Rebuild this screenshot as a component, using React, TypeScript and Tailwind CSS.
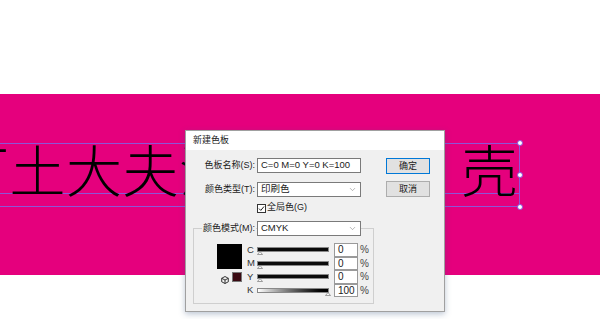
import { ChevronDown } from "lucide-react";

const ROWS = [
    { id: "C", value: "0", bar: "bg-[#0a0a0a]", marker: "left" },
    { id: "M", value: "0", bar: "bg-[#0a0a0a]", marker: "left" },
    { id: "Y", value: "0", bar: "bg-[#0a0a0a]", marker: "left" },
    { id: "K", value: "100", bar: "bg-gradient-to-r from-white to-black", marker: "right" },
];

function Select({ value, width }: { value: string; width: string }) {
    return (
        <div className={`${width} h-[15px] bg-white border border-[#7a7a7a] flex items-center justify-between pl-[3px] pr-[3px]`}>
            <span className="text-[9.5px]">{value}</span>
            <ChevronDown size={9} strokeWidth={1.4} className="text-[#777]" />
        </div>
    );
}

function Label({ text }: { text: string }) {
    return (
        <div className="w-[70px] flex justify-end shrink-0">
            <span className="bg-[#f0f0f0] px-[1px] leading-none text-[9px]">{text}</span>
        </div>
    );
}

function CubeIcon() {
    return (
        <svg width="8" height="8" viewBox="0 0 8 8" className="mt-[4px]">
            <path d="M4 0.5 L7.3 2.3 L7.3 5.8 L4 7.5 L0.7 5.8 L0.7 2.3 Z" fill="none" stroke="#222" strokeWidth="0.9" />
            <path d="M0.7 2.3 L4 4 L7.3 2.3 M4 4 L4 7.5" fill="none" stroke="#222" strokeWidth="0.9" />
        </svg>
    );
}

export default function App() {
    return (
        <div className="relative w-[600px] h-[319px] bg-white overflow-hidden">
            {/* Artboard band */}
            <div className="mt-[94px] h-[181px] bg-[#e5007d] relative">
                {/* Text frame */}
                <div className="absolute left-0 top-[49px] w-[520px] h-[64px] border-t border-b border-r border-[#8d55d8]">
                    <div className="absolute left-0 right-0 top-[49px] h-px bg-[#8d55d8]" />
                    <span className="absolute right-[-4px] top-[-4px] w-[6px] h-[6px] rounded-full bg-white border border-[#8d55d8]" />
                    <span className="absolute right-[-4px] top-[28px] w-[6px] h-[6px] rounded-full bg-white border border-[#8d55d8]" />
                    <span className="absolute right-[-4px] bottom-[-4px] w-[6px] h-[6px] rounded-full bg-white border border-[#8d55d8]" />
                </div>
                <div className="absolute left-[-47px] top-[46px] flex text-[56px] leading-[56px] text-black font-light font-['Noto_Sans_CJK_SC',sans-serif]">
                    <span className="tracking-[0.5px]">可土大夫沙</span>
                    <span className="ml-[226px]">壳</span>
                </div>
            </div>

            {/* Red arrow */}
            <svg className="absolute left-[200px] top-[203px]" width="52" height="20" viewBox="0 0 52 20">
                <polygon points="7,15.5 35.7,10.6 36.4,12.8 47.5,6 34.2,4.4 34.9,6.9" fill="#e8161c" />
            </svg>

            {/* Dialog */}
            <div className="absolute left-[185px] top-[130px] w-[260px] h-[182px] bg-[#f0f0f0] border border-[#a0a0a0] shadow-[0_2px_6px_rgba(60,90,130,0.35)] text-[10px] text-[#1a1a1a] font-['Liberation_Sans','Noto_Sans_CJK_SC',sans-serif]">
                <div className="h-[19px] bg-white flex items-center pl-[7px] text-[9px]">新建色板</div>
                <div className="flex">
                    <div className="w-[198px] pt-[8px]">
                        <div className="flex items-center">
                            <Label text="色板名称(S):" />
                            <div className="ml-[1px] w-[104px] h-[15px] bg-white border border-[#7a7a7a] flex items-center pl-[3px] text-[9.5px]">
                                C=0 M=0 Y=0 K=100
                            </div>
                        </div>
                        <div className="flex items-center mt-[9px]">
                            <Label text="颜色类型(T):" />
                            <div className="ml-[1px]">
                                <Select value="印刷色" width="w-[104px]" />
                            </div>
                        </div>
                        <div className="flex items-center mt-[6px] ml-[71px] h-[10px] gap-[1px]">
                            <div className="w-[9px] h-[9px] border border-[#333] bg-white flex items-center justify-center">
                                <svg width="7" height="7" viewBox="0 0 7 7">
                                    <path d="M1 3.6 L2.8 5.4 L6 1.5" fill="none" stroke="#222" strokeWidth="1" />
                                </svg>
                            </div>
                            <span className="text-[9px]">全局色(G)</span>
                        </div>
                        <div className="relative z-10 flex items-center mt-[8px]">
                            <Label text="颜色模式(M):" />
                            <div className="ml-[1px]">
                                <Select value="CMYK" width="w-[104px]" />
                            </div>
                        </div>
                        <div className="ml-[7px] mt-[-8px] w-[181px] h-[76px] border border-[#cfcfcf] flex pt-[14px] pl-[22px]">
                            <div className="flex flex-col items-end w-[26px] pt-[1px]">
                                <div className="w-[25px] h-[25px] bg-black" />
                                <div className="flex gap-[3px] mt-[3px]">
                                    <CubeIcon />
                                    <div className="w-[10px] h-[10px] bg-[#3a0a12] border border-[#777]" />
                                </div>
                            </div>
                            <div className="ml-[5px] flex flex-col">
                                {ROWS.map((r) => (
                                    <div key={r.id} className="flex items-center h-[13.5px]">
                                        <span className="w-[10px] text-[9.5px] text-[#333]">{r.id}</span>
                                        <div className="relative w-[72px] h-[5px]">
                                            <div className={`w-full h-full border border-[#888] ${r.bar}`} />
                                            <svg
                                                className={`absolute top-[4px] ${r.marker === "left" ? "left-[0px]" : "right-[-2px]"}`}
                                                width="6" height="4" viewBox="0 0 6 4"
                                            >
                                                <path d="M3 0.5 L5.5 3.5 L0.5 3.5 Z" fill="#f8f8f8" stroke="#777" strokeWidth="0.7" />
                                            </svg>
                                        </div>
                                        <div className="ml-[5px] w-[24px] h-[13.5px] bg-white border border-[#9a9a9a] flex items-center pl-[3px]">
                                            {r.value}
                                        </div>
                                        <span className="ml-[2px] text-[#444]">%</span>
                                    </div>
                                ))}
                            </div>
                        </div>
                    </div>
                    <div className="pt-[8px] flex flex-col gap-[7px] ml-[2px]">
                        <button className="w-[44px] h-[16px] bg-[#e1e1e1] border border-[#0078d7] text-[9px] leading-none">
                            确定
                        </button>
                        <button className="w-[44px] h-[16px] bg-[#e1e1e1] border border-[#adadad] text-[9px] leading-none">
                            取消
                        </button>
                    </div>
                </div>
            </div>
        </div>
    );
}
